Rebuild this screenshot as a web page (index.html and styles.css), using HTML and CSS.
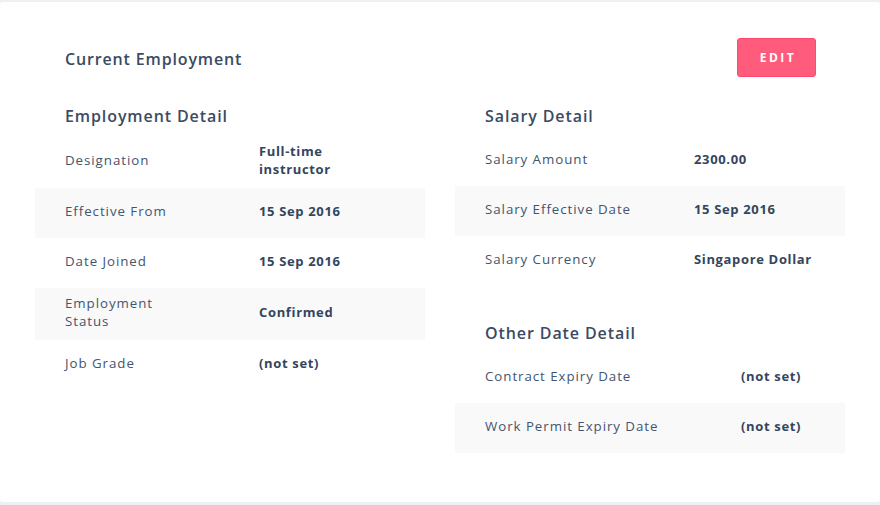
FILE: index.html
```html
<!DOCTYPE html>
<html>
<head>
<meta charset="utf-8">
<link rel="stylesheet" href="styles.css">
</head>
<body>
<div class="card">
  <div class="header">
    <h1 class="title">Current Employment</h1>
    <button class="edit">EDIT</button>
  </div>
  <div class="columns">
    <div class="col">
      <h2 class="section">Employment Detail</h2>
      <div class="list list-emp">
        <div class="row"><div class="label">Designation</div><div class="value">Full-time instructor</div></div>
        <div class="row"><div class="label">Effective From</div><div class="value">15 Sep 2016</div></div>
        <div class="row"><div class="label">Date Joined</div><div class="value">15 Sep 2016</div></div>
        <div class="row"><div class="label">Employment Status</div><div class="value">Confirmed</div></div>
        <div class="row"><div class="label">Job Grade</div><div class="value">(not set)</div></div>
      </div>
    </div>
    <div class="col">
      <h2 class="section">Salary Detail</h2>
      <div class="list list-sal">
        <div class="row"><div class="label">Salary Amount</div><div class="value">2300.00</div></div>
        <div class="row"><div class="label">Salary Effective Date</div><div class="value">15 Sep 2016</div></div>
        <div class="row"><div class="label">Salary Currency</div><div class="value">Singapore Dollar</div></div>
      </div>
      <h2 class="section section-gap">Other Date Detail</h2>
      <div class="list list-other">
        <div class="row"><div class="label">Contract Expiry Date</div><div class="value">(not set)</div></div>
        <div class="row"><div class="label">Work Permit Expiry Date</div><div class="value">(not set)</div></div>
      </div>
    </div>
  </div>
</div>
</body>
</html>
```
FILE: styles.css
```css
html, body {
  margin: 0;
  padding: 0;
}
body {
  background: #eff0f4;
  padding-top: 2px;
  font-family: "Open Sans", "Liberation Sans", sans-serif;
  color: #3d4e66;
  height: 505px;
  box-sizing: border-box;
  overflow: hidden;
}
.card {
  background: #ffffff;
  height: 500px;
  border-radius: 3px;
  box-sizing: border-box;
  padding: 36px 35px 0 35px;
}
.header {
  display: flex;
  justify-content: space-between;
  align-items: center;
  padding: 0 29px 0 30px;
  height: 39px;
}
.title {
  margin: 0;
  font-size: 16px;
  font-weight: 600;
  letter-spacing: 0.85px;
  color: #3a4b63;
  padding-top: 2px;
}
.edit {
  width: 79px;
  height: 39px;
  background: #ff5b7c;
  border: 1px solid #ff4a6e;
  border-radius: 3px;
  color: #ffffff;
  font-family: "Open Sans", "Liberation Sans", sans-serif;
  font-weight: 700;
  font-size: 12px;
  letter-spacing: 2.5px;
  padding: 0 0 0 3px;
}
.columns {
  display: grid;
  grid-template-columns: 390px 390px;
  column-gap: 30px;
  margin-top: 29px;
}
.section {
  margin: 0 0 10px 0;
  padding-left: 30px;
  font-size: 16px;
  font-weight: 600;
  line-height: 20px;
  letter-spacing: 0.9px;
  color: #3a4b63;
  height: 20px;
  box-sizing: border-box;
}
.section-gap {
  margin-top: 37px;
}
.row {
  display: grid;
  align-items: center;
  min-height: 50px;
  padding: 6px 30px 10px 30px;
  box-sizing: border-box;
  font-size: 13px;
  line-height: 18px;
}
.row:nth-child(even) {
  background: #f9f9f9;
}
.list-emp .row {
  grid-template-columns: 105px 130px;
  column-gap: 89px;
}
.list-sal .row {
  grid-template-columns: 209px 1fr;
}
.list-other .row {
  grid-template-columns: 256px 1fr;
}
.label {
  color: #43556e;
  font-size: 13.3px;
  letter-spacing: 0.95px;
}
.value {
  font-weight: 700;
  color: #34455d;
  letter-spacing: 0.65px;
}
```
